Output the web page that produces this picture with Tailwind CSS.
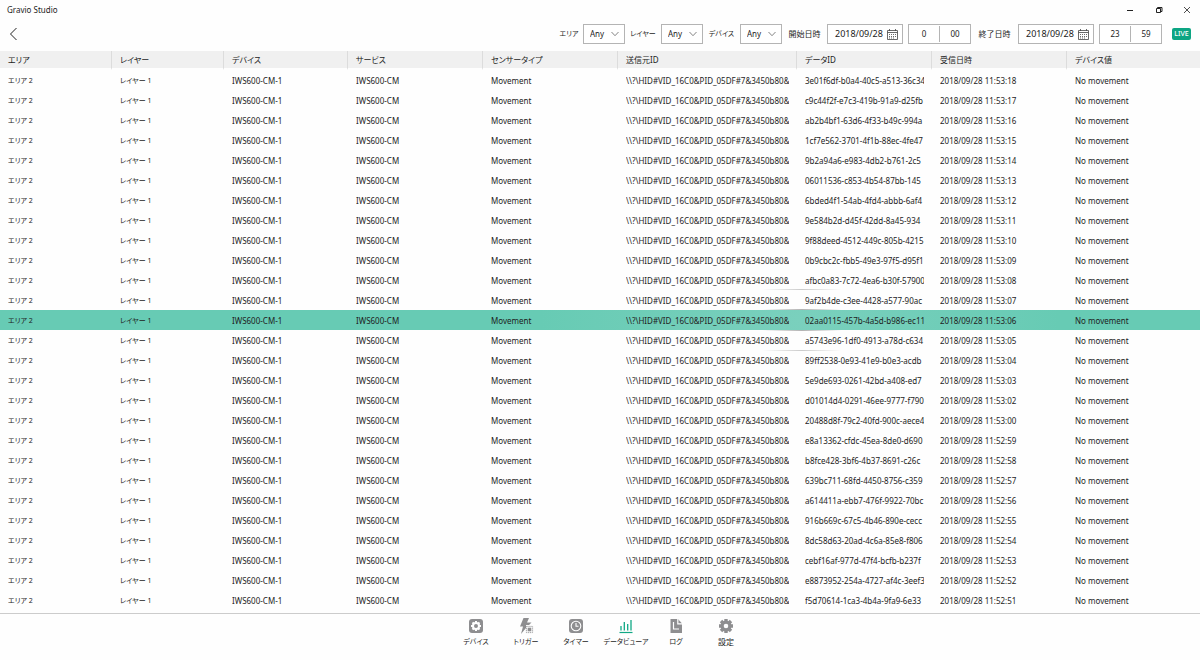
<!DOCTYPE html>
<html lang="ja">
<head>
<meta charset="utf-8">
<meta name="viewport" content="width=device-width, initial-scale=1">
<title>Gravio Studio</title>
<script src="https://cdn.jsdelivr.net/npm/@tailwindcss/browser@4"></script>
</head>
<body class="flex min-h-screen flex-col bg-[#fefefe] font-['Noto_Sans','Noto_Sans_CJK_JP',sans-serif] text-[8px] leading-3 text-[#1c1c1c] [font-feature-settings:'palt']">

<!-- Title bar -->
<header class="flex h-5 items-center justify-between pl-[7px]">
  <h1>Gravio Studio</h1>
  <div class="flex text-[#222]">
    <button type="button" aria-label="Minimize" class="flex h-5 w-7 items-center justify-center"><svg class="size-2" viewBox="0 0 8 8" fill="none" stroke="currentColor"><path d="M1 4.500h6"/></svg></button>
    <button type="button" aria-label="Restore" class="flex h-5 w-[29px] items-center justify-center"><svg class="size-2" viewBox="0 0 8 8" fill="none" stroke="currentColor"><path d="M1.500 2.500h4v4h-4zM2.500 2.500v-1h4.500v4h-1.500"/></svg></button>
    <button type="button" aria-label="Close" class="flex h-5 w-[27px] items-center justify-center"><svg class="size-2" viewBox="0 0 8 8" fill="none" stroke="currentColor" stroke-width=".8"><path d="M1 1l6 6M7 1L1 7"/></svg></button>
  </div>
</header>

<!-- Filters -->
<form class="flex h-[31px] items-start justify-between pt-1 pr-[9px] pl-2">
  <button type="button" aria-label="戻る" class="flex h-5 w-3 items-center justify-center"><svg class="h-[14px] w-3" viewBox="0 0 12 14" fill="none" stroke="#222"><path d="M8.500 1L2.500 7l6 6"/></svg></button>
  <div class="flex h-5 items-center">
    <label for="area" class="w-7 text-center text-[7px]">エリア</label>
    <div class="relative h-5 w-[42px]">
      <select id="area" class="size-full appearance-none border border-[#b4b4b4] bg-white pl-[6px]"><option>Any</option></select>
      <svg class="pointer-events-none absolute top-[7px] right-[6px] h-[6px] w-2" viewBox="0 0 8 6" fill="none" stroke="#666" stroke-width=".8"><path d="M.5 1L4 4.700 7.500 1"/></svg>
    </div>
    <label for="layer" class="w-9 text-center text-[7px]">レイヤー</label>
    <div class="relative h-5 w-[42px]">
      <select id="layer" class="size-full appearance-none border border-[#b4b4b4] bg-white pl-[6px]"><option>Any</option></select>
      <svg class="pointer-events-none absolute top-[7px] right-[6px] h-[6px] w-2" viewBox="0 0 8 6" fill="none" stroke="#666" stroke-width=".8"><path d="M.5 1L4 4.700 7.500 1"/></svg>
    </div>
    <label for="device" class="w-[37px] text-center text-[7px]">デバイス</label>
    <div class="relative h-5 w-[42px]">
      <select id="device" class="size-full appearance-none border border-[#b4b4b4] bg-white pl-[6px]"><option>Any</option></select>
      <svg class="pointer-events-none absolute top-[7px] right-[6px] h-[6px] w-2" viewBox="0 0 8 6" fill="none" stroke="#666" stroke-width=".8"><path d="M.5 1L4 4.700 7.500 1"/></svg>
    </div>
    <label for="from" class="w-[45px] text-center">開始日時</label>
    <div class="flex h-5 w-[76px] items-center border border-[#b4b4b4] bg-white pr-1 pl-[7px]">
      <input id="from" value="2018/09/28" class="w-0 grow text-[9px]">
      <button type="button" aria-label="開始日を選ぶ"><svg class="h-[11px] w-[11px]" viewBox="0 0 11 11" fill="none" stroke="#444" stroke-width=".8"><path d="M.5 1.500h10v9H.5zM.5 3.500h10M2.500 0v2M8.500 0v2"/><path stroke-dasharray="1 1" d="M2 5.500h7.500M2 7.500h7.500M2 9h5"/></svg></button>
    </div>
    <div class="ml-[5px] flex h-5 w-[63px] items-center border border-[#b4b4b4] bg-white">
      <input aria-label="開始 時" value="0" class="w-0 grow text-center">
      <span class="h-4 w-px bg-[#b4b4b4]"></span>
      <input aria-label="開始 分" value="00" class="w-0 grow text-center">
    </div>
    <label for="to" class="w-[47px] text-center">終了日時</label>
    <div class="flex h-5 w-[76px] items-center border border-[#b4b4b4] bg-white pr-1 pl-[7px]">
      <input id="to" value="2018/09/28" class="w-0 grow text-[9px]">
      <button type="button" aria-label="終了日を選ぶ"><svg class="h-[11px] w-[11px]" viewBox="0 0 11 11" fill="none" stroke="#444" stroke-width=".8"><path d="M.5 1.500h10v9H.5zM.5 3.500h10M2.500 0v2M8.500 0v2"/><path stroke-dasharray="1 1" d="M2 5.500h7.500M2 7.500h7.500M2 9h5"/></svg></button>
    </div>
    <div class="ml-[5px] flex h-5 w-[63px] items-center border border-[#b4b4b4] bg-white">
      <input aria-label="終了 時" value="23" class="w-0 grow text-center">
      <span class="h-4 w-px bg-[#b4b4b4]"></span>
      <input aria-label="終了 分" value="59" class="w-0 grow text-center">
    </div>
    <button type="button" class="ml-[10px] h-3 w-[19px] rounded-xs bg-[#0ca583] text-center text-[7px] font-medium text-white">LIVE</button>
  </div>
</form>

<!-- Sensor data -->
<main class="relative grow">
  <table class="w-full table-fixed border-separate border-spacing-0 text-left whitespace-nowrap">
    <colgroup>
      <col class="w-28"><col class="w-28"><col class="w-[124px]"><col class="w-[135px]"><col class="w-[135px]"><col class="w-[179px]"><col class="w-[135px]"><col class="w-[135px]"><col>
    </colgroup>
    <thead>
      <tr class="h-[19px] [&>th]:border-r [&>th]:border-b-2 [&>th]:border-r-[#dcdcdc] [&>th]:border-b-[#fefefe] [&>th]:bg-[#f0f0f0] [&>th]:p-0 [&>th]:pl-2 [&>th]:font-normal [&>th:last-child]:border-r-0">
        <th scope="col">エリア</th><th scope="col">レイヤー</th><th scope="col">デバイス</th><th scope="col">サービス</th><th scope="col">センサータイプ</th><th scope="col">送信元ID</th><th scope="col">データID</th><th scope="col">受信日時</th><th scope="col">デバイス値</th>
      </tr>
    </thead>
    <tbody id="rows" class="[&_td]:p-0 [&_td]:px-2 [&_td]:pt-px [&_td:nth-child(-n+2)]:text-[7px]"></tbody>
  </table>
  <!-- Pointer glow around the selected row -->
  <div class="pointer-events-none absolute top-[238px] left-[762px] flex h-[62px] w-20 flex-col justify-between">
    <i class="h-px bg-radial from-black/20 to-transparent to-70%"></i>
    <i class="h-px bg-radial from-black/30 to-transparent to-70%"></i>
    <i class="h-px bg-radial from-black/30 to-transparent to-70%"></i>
    <i class="h-px bg-radial from-black/20 to-transparent to-70%"></i>
  </div>
</main>

<!-- Navigation -->
<nav class="flex h-[47px] justify-center border-t border-[#ccc] pt-1 pl-0.5 text-[7px] [&>a]:flex [&>a]:w-[50px] [&>a]:flex-col [&>a]:items-center [&>a]:gap-0.5 [&>a]:whitespace-nowrap [&_svg]:size-4">
  <a href="#device"><svg viewBox="0 0 16 16"><rect x="1" y="1" width="14" height="14" rx="3" fill="#8e8e90"/><circle cx="8" cy="8" r="3" fill="none" stroke="#fff" stroke-width="2"/><path stroke="#fff" stroke-width="2" d="M8 3v2M8 11v2M3 8h2M11 8h2M4.500 4.500l1.300 1.300M10.200 10.200l1.300 1.300M4.500 11.500l1.300-1.300M10.200 5.800l1.300-1.300"/></svg>デバイス</a>
  <a href="#trigger"><svg viewBox="0 0 16 16" fill="#8e8e90"><path d="M5.500 0H11L9 4.500h4.500L11 7H8v3l-5 6 2-7.500H2z"/><path fill="none" stroke="#8e8e90" stroke-width=".8" stroke-dasharray="1.300 .7" d="M8.400 8.400h6.200v6.200H8.400z"/><path d="M9.700 9.700h3.600v3.600H9.700z"/></svg>トリガー</a>
  <a href="#timer"><svg viewBox="0 0 16 16"><rect x="1" y="1" width="14" height="14" rx="3" fill="#8e8e90"/><circle cx="8" cy="8" r="4.800" fill="none" stroke="#fff" stroke-width="1.100"/><path fill="none" stroke="#fff" stroke-width="1.100" d="M8 5v3.300h2.500"/></svg>タイマー</a>
  <a href="#viewer" aria-current="page"><svg viewBox="0 0 16 16" fill="none" stroke="#10a885"><path stroke-width="1.200" d="M1.500 14.500h13"/><path stroke-width="1.300" d="M3 12.500V8M6.300 12.500V4M9.700 12.500V6M13 12.500V2"/></svg>データビューア</a>
  <a href="#log"><svg viewBox="0 0 16 16"><path fill="#8e8e90" d="M2.500 1h7.500l4 4.500V15H2.500z"/><path fill="none" stroke="#fff" stroke-width="1.200" d="M5.500 4v7H11M9.800 1v4.800H14"/></svg>ログ</a>
  <a href="#settings" class="text-[8px]"><svg viewBox="0 0 16 16" fill="none" stroke="#8e8e90"><circle cx="8" cy="8" r="3.900" stroke-width="3.200"/><path stroke-width="3.400" d="M8 1v2.500M8 12.500V15M1 8h2.500M12.500 8H15M3 3l2 2M11 11l2 2M3 13l2-2M11 5l2-2"/></svg>設定</a>
</nav>

<script>
const records = [
  ['53:18','3e01f6df-b0a4-40c5-a513-36c34'],['53:17','c9c44f2f-e7c3-419b-91a9-d25fb'],['53:16','ab2b4bf1-63d6-4f33-b49c-994a'],
  ['53:15','1cf7e562-3701-4f1b-88ec-4fe47'],['53:14','9b2a94a6-e983-4db2-b761-2c5'],['53:13','06011536-c853-4b54-87bb-145'],
  ['53:12','6bded4f1-54ab-4fd4-abbb-6af4'],['53:11','9e584b2d-d45f-42dd-8a45-934'],['53:10','9f88deed-4512-449c-805b-4215'],
  ['53:09','0b9cbc2c-fbb5-49e3-97f5-d95f1'],['53:08','afbc0a83-7c72-4ea6-b30f-57900'],['53:07','9af2b4de-c3ee-4428-a577-90ac'],
  ['53:06','02aa0115-457b-4a5d-b986-ec11'],['53:05','a5743e96-1df0-4913-a78d-c634'],['53:04','89ff2538-0e93-41e9-b0e3-acdb'],
  ['53:03','5e9de693-0261-42bd-a408-ed7'],['53:02','d01014d4-0291-46ee-9777-f790'],['53:00','20488d8f-79c2-40fd-900c-aece4'],
  ['52:59','e8a13362-cfdc-45ea-8de0-d690'],['52:58','b8fce428-3bf6-4b37-8691-c26c'],['52:57','639bc711-68fd-4450-8756-c359'],
  ['52:56','a614411a-ebb7-476f-9922-70bc'],['52:55','916b669c-67c5-4b46-890e-cecc'],['52:54','8dc58d63-20ad-4c6a-85e8-f806'],
  ['52:53','cebf16af-977d-47f4-bcfb-b237f'],['52:52','e8873952-254a-4727-af4c-3eef3'],['52:51','f5d70614-1ca3-4b4a-9fa9-6e33']
];
const selected = 12;
document.getElementById('rows').innerHTML = records.map(([time, id], i) => {
  const cells = ['エリア 2', 'レイヤー 1', 'IWS600-CM-1', 'IWS600-CM', 'Movement', '\\\\?\\HID#VID_16C0&amp;PID_05DF#7&amp;3450b80&amp;', id, '2018/09/28 11:' + time, 'No movement'];
  const tone = i === selected ? 'h-5 bg-[radial-gradient(circle_at_800px_10px,#7ad0bd,#67cbb4_260px)]' : 'h-5';
  return `<tr class="${tone}">` + cells.map(c => `<td><div class="overflow-hidden">${c}</div></td>`).join('') + '</tr>';
}).join('');
</script>
</body>
</html>
